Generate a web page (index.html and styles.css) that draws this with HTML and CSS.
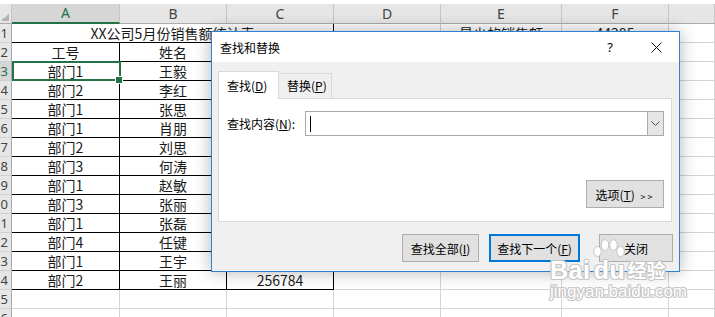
FILE: index.html
```html
<!DOCTYPE html>
<html lang="zh-CN">
<head>
    <meta charset="UTF-8">
    <title>查找和替换</title>
    <link rel="stylesheet" href="styles.css">
</head>
<body>
    <div class="top-strip"></div>
    <table class="sheet">
        <colgroup>
            <col class="c-rh"><col class="c-a"><col class="c-b"><col class="c-c"><col class="c-d"><col class="c-e"><col class="c-f"><col class="c-g">
        </colgroup>
        <tr class="col-head">
            <th class="corner"></th><th class="on">A</th><th>B</th><th>C</th><th>D</th><th>E</th><th>F</th><th></th>
        </tr>
        <tr><th class="rh"><span>1</span></th><td class="k" colspan="3">XX公司5月份销售额统计表</td><td></td><td>最少的销售额</td><td>44285</td><td></td></tr>
        <tr><th class="rh"><span>2</span></th><td class="k">工号</td><td class="k">姓名</td><td class="k">销售额</td><td></td><td></td><td></td><td></td></tr>
        <tr><th class="rh on"><span>3</span></th><td class="k sel">部门1</td><td class="k">王毅</td><td class="k"></td><td></td><td></td><td></td><td></td></tr>
        <tr><th class="rh"><span>4</span></th><td class="k">部门2</td><td class="k">李红</td><td class="k"></td><td></td><td></td><td></td><td></td></tr>
        <tr><th class="rh"><span>5</span></th><td class="k">部门1</td><td class="k">张思</td><td class="k"></td><td></td><td></td><td></td><td></td></tr>
        <tr><th class="rh"><span>6</span></th><td class="k">部门1</td><td class="k">肖朋</td><td class="k"></td><td></td><td></td><td></td><td></td></tr>
        <tr><th class="rh"><span>7</span></th><td class="k">部门2</td><td class="k">刘思</td><td class="k"></td><td></td><td></td><td></td><td></td></tr>
        <tr><th class="rh"><span>8</span></th><td class="k">部门3</td><td class="k">何涛</td><td class="k"></td><td></td><td></td><td></td><td></td></tr>
        <tr><th class="rh"><span>9</span></th><td class="k">部门1</td><td class="k">赵敏</td><td class="k"></td><td></td><td></td><td></td><td></td></tr>
        <tr><th class="rh"><span>10</span></th><td class="k">部门3</td><td class="k">张丽</td><td class="k"></td><td></td><td></td><td></td><td></td></tr>
        <tr><th class="rh"><span>11</span></th><td class="k">部门1</td><td class="k">张磊</td><td class="k"></td><td></td><td></td><td></td><td></td></tr>
        <tr><th class="rh"><span>12</span></th><td class="k">部门4</td><td class="k">任键</td><td class="k"></td><td></td><td></td><td></td><td></td></tr>
        <tr><th class="rh"><span>13</span></th><td class="k">部门1</td><td class="k">王宇</td><td class="k"></td><td></td><td></td><td></td><td></td></tr>
        <tr><th class="rh"><span>14</span></th><td class="k">部门2</td><td class="k">王丽</td><td class="k">256784</td><td></td><td></td><td></td><td></td></tr>
        <tr><th class="rh"><span>15</span></th><td></td><td></td><td></td><td></td><td></td><td></td><td></td></tr>
        <tr><th class="rh"><span>16</span></th><td></td><td></td><td></td><td></td><td></td><td></td><td></td></tr>
    </table>

    <!-- Find and replace window -->
    <div class="dialog">
        <div class="dlg-title">
            <span class="dlg-name">查找和替换</span>
            <span class="dlg-help">?</span>
            <svg class="dlg-close" width="11" height="11" viewBox="0 0 11 11">
                <path d="M0.5 0.5 L10.5 10.5 M10.5 0.5 L0.5 10.5" stroke="#111" stroke-width="1" fill="none"/>
            </svg>
        </div>
        <div class="dlg-body">
            <div class="tabs">
                <div class="tab active">查找(<u>D</u>)</div>
                <div class="tab">替换(<u>P</u>)</div>
            </div>
            <div class="panel">
                <div class="find-row">
                    <span class="find-label">查找内容(<u>N</u>):</span>
                    <div class="combo">
                        <div class="combo-input"><i class="caret"></i></div>
                        <div class="combo-btn">
                            <svg width="9" height="6" viewBox="0 0 9 6">
                                <polyline points="0.5,0.5 4.5,4.5 8.5,0.5" stroke="#555" stroke-width="1" fill="none"/>
                            </svg>
                        </div>
                    </div>
                </div>
                <div class="opt-row">
                    <button class="btn btn-opt">选项(<u>T</u>) <span class="arrows">&gt;&gt;</span></button>
                </div>
            </div>
            <div class="btn-row">
                <button class="btn btn-all">查找全部(<u>I</u>)</button>
                <button class="btn btn-next">查找下一个(<u>F</u>)</button>
                <button class="btn btn-close">关闭</button>
            </div>
        </div>
    </div>

    <!-- Watermark -->
    <div class="watermark">
        <div class="wm-logo">
            <span class="wm-bai">Bai</span>
            <span class="wm-paw">
                <svg width="32" height="19" viewBox="0 0 32 19">
                    <ellipse cx="4.5" cy="12.5" rx="3.8" ry="5" />
                    <ellipse cx="12" cy="6" rx="3.8" ry="5.3" />
                    <ellipse cx="20.5" cy="6" rx="3.8" ry="5.3" />
                    <ellipse cx="27.5" cy="12.5" rx="3.8" ry="5" />
                </svg>
                <span class="wm-du">du</span>
            </span>
            <span class="wm-jy">经验</span>
        </div>
        <div class="wm-url">jingyan.baidu.com</div>
    </div>
</body>
</html>
```

FILE: styles.css
```css
* {
    margin: 0;
    padding: 0;
    box-sizing: border-box;
}

body {
    width: 715px;
    height: 317px;
    overflow: hidden;
    position: relative;
    background: #fff;
    font-family: "Noto Sans CJK SC", sans-serif;
}

.top-strip {
    height: 4px;
    background: #fff;
}

/* Spreadsheet grid */
.sheet {
    border-collapse: separate;
    border-spacing: 0;
    table-layout: fixed;
    width: 715px;
    font-size: 14px;
    color: #1a1a1a;
}

.c-rh { width: 12px; }
.c-a { width: 108px; }
.c-b { width: 107px; }
.c-c { width: 107px; }
.c-d { width: 107px; }
.c-e { width: 121px; }
.c-f { width: 107px; }
.c-g { width: 46px; }

.sheet td,
.sheet th {
    height: 19px;
    padding: 0;
    border-right: 1px solid #d4d4d4;
    border-bottom: 1px solid #d4d4d4;
    text-align: center;
    line-height: 18px;
    white-space: nowrap;
    overflow: hidden;
    font-weight: normal;
}

.col-head th {
    background: #e6e6e6;
    border-right-color: #c6c6c6;
    border-bottom-color: #ababab;
    color: #444;
    font-family: "Noto Sans", sans-serif;
    font-size: 14px;
}

.col-head th.on {
    background: #d6d6d6;
    color: #217346;
    border-bottom: 2px solid #217346;
}

.col-head th.corner {
    background: #e6e6e6 linear-gradient(135deg, transparent 50%, #b4b4b4 50%) no-repeat;
    background-size: 8px 8px;
    background-position: 1px 9px;
}

.sheet th.rh {
    background: #e6e6e6;
    border-right-color: #ababab;
    border-bottom-color: #d0d0d0;
    color: #444;
    font-family: "Noto Sans", sans-serif;
    font-size: 13px;
}

.sheet th.rh.on {
    background: #d6d6d6;
    color: #217346;
}

.rh span {
    display: block;
    width: 30px;
    margin-left: -18px;
    text-align: right;
    padding-right: 4px;
}

.sheet td.k {
    border-right-color: #000;
    border-bottom-color: #000;
}

.sheet td.sel {
    position: relative;
    overflow: visible;
}

.sheet td.sel::after {
    content: '';
    position: absolute;
    top: -1px;
    left: 0;
    right: -2px;
    bottom: -1px;
    border: 2px solid #217346;
}

.sheet td.sel::before {
    content: '';
    position: absolute;
    right: -4px;
    bottom: -4px;
    width: 6px;
    height: 6px;
    background: #217346;
    border: 1px solid #fff;
    z-index: 1;
}

/* Dialog */
.dialog {
    position: absolute;
    left: 211px;
    top: 31px;
    width: 469px;
    height: 241px;
    border: 1px solid #2b83d4;
    background: #f0f0f0;
    box-shadow: 0 0 16px rgba(0, 0, 0, 0.3);
    font-size: 12px;
    color: #000;
}

.dlg-title {
    height: 30px;
    background: #fff;
    display: flex;
    align-items: center;
    padding-left: 8px;
}

.dlg-help {
    margin-left: auto;
    margin-right: 38px;
    font-family: "Noto Sans", sans-serif;
    font-size: 13px;
}

.dlg-close {
    margin-right: 17px;
}

.dlg-body {
    padding: 9px 6px 0 6px;
}

.tabs {
    display: flex;
    align-items: flex-end;
    margin-bottom: -1px;
    position: relative;
    z-index: 1;
}

.tab {
    height: 26px;
    width: 54px;
    margin-left: -1px;
    padding-left: 8px;
    border: 1px solid #d9d9d9;
    background: #f0f0f0;
    line-height: 24px;
}

.tab.active {
    height: 28px;
    width: 61px;
    margin-left: 0;
    border-bottom: 0;
    background: #fff;
    line-height: 27px;
}

.panel {
    width: 454px;
    height: 124px;
    background: #fff;
    border: 1px solid #d9d9d9;
    padding: 12px 7px 0 8px;
}

.find-row {
    display: flex;
    align-items: center;
}

.find-label {
    width: 78px;
}

.combo {
    flex: 1;
    height: 25px;
    display: flex;
    border: 1px solid #a9a9a9;
}

.combo-input {
    flex: 1;
    display: flex;
    align-items: center;
    padding-left: 4px;
}

.caret {
    width: 1px;
    height: 16px;
    background: #000;
}

.combo-btn {
    width: 16px;
    background: #e5e5e5;
    border-left: 1px solid #a9a9a9;
    display: flex;
    align-items: center;
    justify-content: center;
}

.opt-row {
    display: flex;
    justify-content: flex-end;
    margin-top: 44px;
}

.btn {
    height: 28px;
    background: #e1e1e1;
    border: 1px solid #adadad;
    font-family: "Noto Sans CJK SC", sans-serif;
    font-size: 12px;
    color: #000;
}

.btn-opt {
    width: 78px;
}

.arrows {
    font-size: 9px;
    letter-spacing: 2px;
    margin-left: 3px;
}

.btn-row {
    display: flex;
    justify-content: flex-end;
    margin-top: 12px;
}

.btn-all {
    width: 77px;
    margin-right: 10px;
}

.btn-next {
    width: 91px;
    margin-right: 19px;
    border: 2px solid #0078d7;
}

.btn-close {
    width: 74px;
}

/* Watermark */
.watermark {
    position: absolute;
    left: 550px;
    top: 239px;
    color: #fff;
    text-shadow: 1px 0 0 #c4c4c4, -1px 0 0 #c4c4c4, 0 1px 0 #c4c4c4, 0 -1px 0 #c4c4c4,
        1px 1px 0 #d8d8d8, -1px -1px 0 #d8d8d8, 1px -1px 0 #d8d8d8, -1px 1px 0 #d8d8d8;
}

.wm-logo {
    display: flex;
    align-items: flex-end;
}

.wm-bai,
.wm-du {
    font-family: "Liberation Sans", sans-serif;
    font-weight: bold;
    font-size: 25px;
    line-height: 24px;
    letter-spacing: 0.5px;
}

.wm-paw {
    display: flex;
    flex-direction: column;
    align-items: center;
    margin-left: 3px;
}

.wm-paw svg {
    fill: #fff;
    stroke: #c4c4c4;
    stroke-width: 1;
}

.wm-jy {
    font-weight: bold;
    font-size: 19px;
    line-height: 24px;
    margin-left: 2px;
}

.wm-url {
    font-family: "Liberation Sans", sans-serif;
    font-size: 17px;
    line-height: 18px;
    margin-top: 1px;
}
```
